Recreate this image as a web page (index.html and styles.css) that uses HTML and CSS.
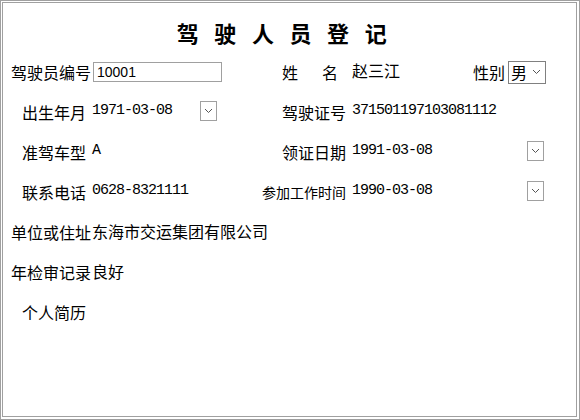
FILE: index.html
```html
<!DOCTYPE html>
<html lang="zh-CN">
<head>
  <meta charset="UTF-8" />
  <title>驾驶人员登记</title>
  <link rel="stylesheet" href="styles.css">
</head>
<body>
  <div class="frame">
    <div class="panel">
      <h1 class="title">驾驶人员登记</h1>

      <div class="form">
        <div class="row">
          <span class="label">驾驶员编号</span>
          <div class="cell">
            <input class="text-input" type="text" value="10001">
          </div>
          <span class="label right-label name-label">姓<span class="gap"></span>名</span>
          <div class="cell wide">
            <span class="value cjk raised">赵三江</span>
            <span class="label gender-label">性别</span>
            <div class="select-box">
              <span class="select-text">男</span>
              <svg class="chev" width="9" height="6" viewBox="0 0 9 6"><path d="M1 1 L4.5 4.5 L8 1" fill="none" stroke="#555" stroke-width="1"/></svg>
            </div>
          </div>
        </div>

        <div class="row">
          <span class="label indent">出生年月</span>
          <div class="cell">
            <span class="value date">1971-03-08</span>
            <span class="drop-btn">
              <svg width="9" height="6" viewBox="0 0 9 6"><path d="M1 1 L4.5 4.5 L8 1" fill="none" stroke="#555" stroke-width="1"/></svg>
            </span>
          </div>
          <span class="label right-label">驾驶证号</span>
          <div class="cell wide">
            <span class="value">371501197103081112</span>
          </div>
        </div>

        <div class="row">
          <span class="label indent">准驾车型</span>
          <div class="cell">
            <span class="value">A</span>
          </div>
          <span class="label right-label">领证日期</span>
          <div class="cell wide">
            <span class="value date-r">1991-03-08</span>
            <span class="drop-btn">
              <svg width="9" height="6" viewBox="0 0 9 6"><path d="M1 1 L4.5 4.5 L8 1" fill="none" stroke="#555" stroke-width="1"/></svg>
            </span>
          </div>
        </div>

        <div class="row">
          <span class="label indent">联系电话</span>
          <div class="cell">
            <span class="value">0628-8321111</span>
          </div>
          <span class="label right-label small">参加工作时间</span>
          <div class="cell wide">
            <span class="value date-r">1990-03-08</span>
            <span class="drop-btn">
              <svg width="9" height="6" viewBox="0 0 9 6"><path d="M1 1 L4.5 4.5 L8 1" fill="none" stroke="#555" stroke-width="1"/></svg>
            </span>
          </div>
        </div>

        <div class="row">
          <span class="label">单位或住址</span>
          <span class="value cjk">东海市交运集团有限公司</span>
        </div>

        <div class="row">
          <span class="label">年检审记录</span>
          <span class="value cjk">良好</span>
        </div>

        <div class="row">
          <span class="label indent">个人简历</span>
        </div>
      </div>
    </div>
  </div>
</body>
</html>
```

FILE: styles.css
```css
body {
  margin: 0;
  background: #ffffff;
  color: #000;
  font-family: "Noto Sans CJK SC", "DejaVu Sans", sans-serif;
}

.frame {
  width: 580px;
  height: 420px;
  box-sizing: border-box;
  border: 1px solid #a0a0a0;
  padding: 1px 2px 2px 1px;
}

.panel {
  height: 100%;
  box-sizing: border-box;
  border: 1px solid #a0a0a0;
}

.title {
  margin: 0;
  padding-top: 9px;
  height: 40px;
  line-height: 40px;
  text-align: center;
  font-size: 22px;
  font-weight: bold;
  letter-spacing: 15.6px;
}

.form {
  padding-left: 8px;
}

.row {
  display: flex;
  align-items: center;
  height: 40px;
}

.label {
  width: 81px;
  flex: none;
  font-size: 16px;
  line-height: 20px;
  white-space: nowrap;
}

.label.indent {
  padding-left: 11px;
  box-sizing: border-box;
}

.cell {
  width: 170px;
  flex: none;
  display: flex;
  align-items: center;
}

.cell.wide {
  width: 194px;
  flex: none;
}

.right-label {
  width: 90px;
  padding-left: 20px;
  box-sizing: border-box;
}

.right-label.small {
  padding-left: 0;
  font-size: 14px;
}

.name-label .gap {
  display: inline-block;
  width: 24px;
}

.value {
  font-family: "Liberation Mono", monospace;
  font-size: 15px;
  letter-spacing: -1px;
  line-height: 20px;
  margin-bottom: 3px;
  white-space: nowrap;
}

.value.cjk {
  font-family: "Noto Sans CJK SC", sans-serif;
  font-size: 16px;
  letter-spacing: 0;
  margin-bottom: 2px;
}

.value.cjk.raised {
  margin-bottom: 5px;
}

.value.date {
  width: 108px;
}

.value.date-r {
  width: 175px;
}

.text-input {
  width: 129px;
  height: 20px;
  box-sizing: border-box;
  margin: 0 0 0 1px;
  padding: 0 3px;
  border: 1px solid #a0a0a0;
  font-family: "Liberation Sans", sans-serif;
  font-size: 14px;
  color: #000;
}

.gender-label {
  width: auto;
  margin-left: 73px;
  margin-right: 3px;
}

.select-box {
  width: 39px;
  height: 23px;
  box-sizing: border-box;
  border: 1px solid #808080;
  display: flex;
  align-items: center;
  padding-left: 2px;
  gap: 5px;
}

.select-text {
  font-size: 16px;
  line-height: 20px;
}

.drop-btn {
  width: 17px;
  height: 20px;
  box-sizing: border-box;
  border: 1px solid #a0a0a0;
  display: flex;
  align-items: center;
  justify-content: center;
  margin-bottom: 3px;
}
```
